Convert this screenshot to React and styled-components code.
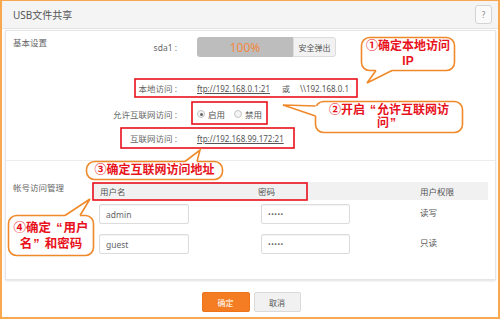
import React from "react";
import styled, { createGlobalStyle } from "styled-components";

const GlobalStyle = createGlobalStyle`
  html, body { margin: 0; padding: 0; background: #fff; }
  body { font-family: "Noto Sans", "Noto Sans CJK SC", sans-serif; color: #555; }
  * { box-sizing: border-box; }
`;

const Page = styled.div`
  position: relative;
  width: 500px;
  height: 321px;
  overflow: hidden;
  background: #fff;
`;

const Frame = styled.div`
  width: 500px;
  height: 319px;
  border: 2px solid #f8a94f;
  border-top-width: 1px;
  display: flex;
  flex-direction: column;
`;

const Header = styled.div`
  flex: none;
  height: 28px;
  display: flex;
  align-items: center;
  justify-content: space-between;
  background: #f4f4f4;
  border-bottom: 1px solid #e3e3e3;
  padding: 0 6px 0 11px;
`;

const Title = styled.div`
  font-size: 10px;
  color: #555;
  line-height: 12px;
`;

const HelpBtn = styled.div`
  width: 17px;
  height: 19px;
  border: 1px solid #d4d4d4;
  border-radius: 3px;
  background: #fafafa;
  display: flex;
  align-items: center;
  justify-content: center;
  font-size: 8px;
  color: #888;
`;

const Body = styled.div`
  flex: 1;
  display: flex;
  flex-direction: column;
  padding: 1px 2px 0 3px;
`;

const Panel = styled.div`
  border: 1px solid #e6e6e6;
  box-shadow: 0 1px 2px rgba(0, 0, 0, 0.12);
  background: #fff;
`;

const Section = styled.div`
  display: grid;
  grid-template-columns: 80px 1fr;
  padding: ${(p) => p.$pad};
  border-top: ${(p) => (p.$divider ? "1px solid #ececec" : "none")};
`;

const SectionTitle = styled.div`
  font-size: 8.5px;
  line-height: 12px;
  color: #666;
  padding-top: ${(p) => p.$top || 0}px;
`;

const Fields = styled.div`
  display: flex;
  flex-direction: column;
`;

const FieldRow = styled.div`
  display: grid;
  grid-template-columns: 84px 1fr;
  column-gap: 20px;
  align-items: center;
  height: 20px;
  margin-top: ${(p) => p.$mt || 0}px;
`;

const Label = styled.div`
  text-align: right;
  font-size: 8.5px;
  color: #666;
  white-space: nowrap;
`;

const Value = styled.div`
  display: flex;
  align-items: center;
  font-size: 8px;
  color: #555;
  white-space: nowrap;
`;

const Progress = styled.div`
  width: 96px;
  height: 20px;
  background: #bdbdbd;
  border-radius: 3px 0 0 3px;
  color: #f3883f;
  font-size: 12px;
  display: flex;
  align-items: center;
  justify-content: center;
`;

const EjectBtn = styled.div`
  width: 43px;
  height: 20px;
  background: #f2f2f2;
  border: 1px solid #dcdcdc;
  border-radius: 0 3px 3px 0;
  font-size: 8px;
  color: #555;
  display: flex;
  align-items: center;
  justify-content: center;
`;

const Link = styled.span`
  text-decoration: underline;
  color: #555;
`;

const Or = styled.span`
  margin: 0 10px 0 12px;
  font-size: 8px;
`;

const RadioGroup = styled.label`
  display: flex;
  align-items: center;
  gap: 3px;
  margin-right: 9px;
  font-size: 8.5px;
  color: #555;
`;

const Radio = styled.span`
  width: 8px;
  height: 8px;
  border-radius: 50%;
  border: 1px solid #c4c4c4;
  background: #f4f4f4;
  display: flex;
  align-items: center;
  justify-content: center;
  &::after {
    content: "";
    width: 3px;
    height: 3px;
    border-radius: 50%;
    background: ${(p) => (p.$on ? "#666" : "transparent")};
  }
`;

const Table = styled.div`
  display: grid;
  grid-template-columns: 160px 160px 1fr;
`;

const HeadCell = styled.div`
  height: 18px;
  background: #f1f1f1;
  display: flex;
  align-items: center;
  padding-left: ${(p) => p.$pl}px;
  font-size: 8.5px;
  color: #555;
`;

const Cell = styled.div`
  height: 30px;
  padding: ${(p) => (p.$text ? "6px" : "4px")} 0 0 ${(p) => p.$pl}px;
  font-size: 8.5px;
  color: #555;
`;

const Input = styled.div`
  width: ${(p) => p.$w}px;
  height: 20px;
  border: 1px solid #dcdcdc;
  border-radius: 2px;
  box-shadow: inset 0 1px 1px rgba(0, 0, 0, 0.05);
  display: flex;
  align-items: center;
  padding-left: 6px;
  font-size: ${(p) => (p.$pw ? "7px" : "8.5px")};
  letter-spacing: ${(p) => (p.$pw ? "0.5px" : "0")};
  color: #666;
`;

const Actions = styled.div`
  display: flex;
  justify-content: center;
  gap: 4px;
  margin-top: 12px;
  padding-left: 1px;
`;

const Button = styled.div`
  width: ${(p) => p.$w}px;
  height: 20px;
  border-radius: 2px;
  display: flex;
  align-items: center;
  justify-content: center;
  font-size: 8px;
  background: ${(p) => (p.$primary ? "#f47d23" : "#f1f1f1")};
  color: ${(p) => (p.$primary ? "#fff" : "#555")};
  border: 1px solid ${(p) => (p.$primary ? "#ef7418" : "#dadada")};
`;

const Overlay = styled.svg`
  position: absolute;
  left: 0;
  top: 0;
  pointer-events: none;
`;

const CalloutText = styled.div`
  position: absolute;
  left: ${(p) => p.$x}px;
  top: ${(p) => p.$y}px;
  width: ${(p) => p.$w}px;
  height: ${(p) => p.$h}px;
  display: flex;
  flex-direction: column;
  align-items: center;
  justify-content: center;
  text-align: center;
  font-family: "Liberation Sans", "Noto Sans CJK SC", sans-serif;
  font-weight: 700;
  font-size: ${(p) => p.$fs || 12}px;
  color: #e8121c;
  white-space: nowrap;
  pointer-events: none;
`;

const CalloutLine = styled.div`
  display: block;
  height: ${(p) => p.$lh}px;
  line-height: ${(p) => p.$lh}px;
  overflow: visible;
`;

const Quote = styled.span`
  display: inline-block;
  width: 1em;
  text-align: ${(p) => (p.$open ? "right" : "left")};
  padding: ${(p) => (p.$open ? "0 1px 0 0" : "0 0 0 1px")};
`;

const callouts = [
  {
    x: 361.5, y: 37.5, w: 93, h: 33,
    b1: [376, 70.5], tip: [367, 83], b2: [392, 70.5], n: [0, -3],
    lines: ["①确定本地访问", "IP"], lh: 15,
  },
  {
    x: 315.5, y: 101.5, w: 147, h: 31,
    b1: [315.5, 106], tip: [283, 105], b2: [315.5, 116], n: [3, 0],
    lines: ["②开启“允许互联网访", "问”"], lh: 13.5,
  },
  {
    x: 86.5, y: 161.5, w: 136, h: 18,
    b1: [185, 161.5], tip: [200, 150], b2: [197, 161.5], n: [0, 3],
    lines: ["③确定互联网访问地址"], lh: 15,
  },
  {
    x: 8.5, y: 215.5, w: 85, h: 40,
    b1: [65, 215.5], tip: [90, 199], b2: [80, 215.5], n: [0, 3],
    lines: ["④确定“用户", "名”和密码"], lh: 16, fs: 12.5,
  },
];

const redBoxes = [
  [135, 79, 222, 18],
  [192, 102, 75, 22],
  [121, 128, 173, 20],
  [93, 183, 214, 17],
];

const pt = (a) => `${a[0]},${a[1]}`;

function renderLine(text) {
  return text.split(/([“”])/).map((part, k) => {
    if (part === "“") return <Quote key={k} $open>“</Quote>;
    if (part === "”") return <Quote key={k}>”</Quote>;
    return part ? <React.Fragment key={k}>{part}</React.Fragment> : null;
  });
}

function Annotations() {
  return (
    <>
      <Overlay width="500" height="321" viewBox="0 0 500 321">
        {redBoxes.map(([x, y, w, h], i) => (
          <rect key={i} x={x} y={y} width={w} height={h} fill="none" stroke="#e8101b" strokeWidth="1.6" />
        ))}
        {callouts.map((c, i) => {
          const b1in = [c.b1[0] + c.n[0], c.b1[1] + c.n[1]];
          const b2in = [c.b2[0] + c.n[0], c.b2[1] + c.n[1]];
          return (
            <g key={i}>
              <rect x={c.x} y={c.y} width={c.w} height={c.h} rx="8" fill="#fff" stroke="#f0892a" strokeWidth="1.6" />
              <polygon points={`${pt(b1in)} ${pt(c.b1)} ${pt(c.tip)} ${pt(c.b2)} ${pt(b2in)}`} fill="#fff" />
              <polyline points={`${pt(c.b1)} ${pt(c.tip)} ${pt(c.b2)}`} fill="none" stroke="#f0892a" strokeWidth="1.6" strokeLinejoin="miter" />
            </g>
          );
        })}
      </Overlay>
      {callouts.map((c, i) => (
        <CalloutText key={i} $x={c.x} $y={c.y} $w={c.w} $h={c.h} $fs={c.fs}>
          {c.lines.map((l, j) => (
            <CalloutLine key={j} $lh={c.lh}>{renderLine(l)}</CalloutLine>
          ))}
        </CalloutText>
      ))}
    </>
  );
}

const users = [
  { name: "admin", perm: "读写" },
  { name: "guest", perm: "只读" },
];

export default function App() {
  return (
    <Page>
      <GlobalStyle />
      <Frame>
        <Header>
          <Title>USB文件共享</Title>
          <HelpBtn>?</HelpBtn>
        </Header>
        <Body>
          <Panel>
            <Section $pad="6px 7px 12px 7px">
              <SectionTitle>基本设置</SectionTitle>
              <Fields>
                <FieldRow>
                  <Label>sda1 :</Label>
                  <Value>
                    <Progress>100%</Progress>
                    <EjectBtn>安全弹出</EjectBtn>
                  </Value>
                </FieldRow>
                <FieldRow $mt={21}>
                  <Label>本地访问 :</Label>
                  <Value>
                    <Link>ftp://192.168.0.1:21</Link>
                    <Or>或</Or>
                    <span>\\192.168.0.1</span>
                  </Value>
                </FieldRow>
                <FieldRow $mt={6}>
                  <Label>允许互联网访问 :</Label>
                  <Value>
                    <RadioGroup>
                      <Radio $on />
                      启用
                    </RadioGroup>
                    <RadioGroup>
                      <Radio />
                      禁用
                    </RadioGroup>
                  </Value>
                </FieldRow>
                <FieldRow $mt={4}>
                  <Label>互联网访问 :</Label>
                  <Value>
                    <Link>ftp://192.168.99.172:21</Link>
                  </Value>
                </FieldRow>
              </Fields>
            </Section>
            <Section $divider $pad="21px 7px 19px 7px">
              <SectionTitle>帐号访问管理</SectionTitle>
              <Table>
                <HeadCell $pl={7}>用户名</HeadCell>
                <HeadCell $pl={5}>密码</HeadCell>
                <HeadCell $pl={7}>用户权限</HeadCell>
                {users.map((u) => (
                  <React.Fragment key={u.name}>
                    <Cell $pl={6}>
                      <Input $w={90}>{u.name}</Input>
                    </Cell>
                    <Cell $pl={8}>
                      <Input $w={89} $pw>•••••</Input>
                    </Cell>
                    <Cell $pl={7} $text>
                      {u.perm}
                    </Cell>
                  </React.Fragment>
                ))}
              </Table>
            </Section>
          </Panel>
          <Actions>
            <Button $primary $w={48}>确定</Button>
            <Button $w={47}>取消</Button>
          </Actions>
        </Body>
      </Frame>
      <Annotations />
    </Page>
  );
}
